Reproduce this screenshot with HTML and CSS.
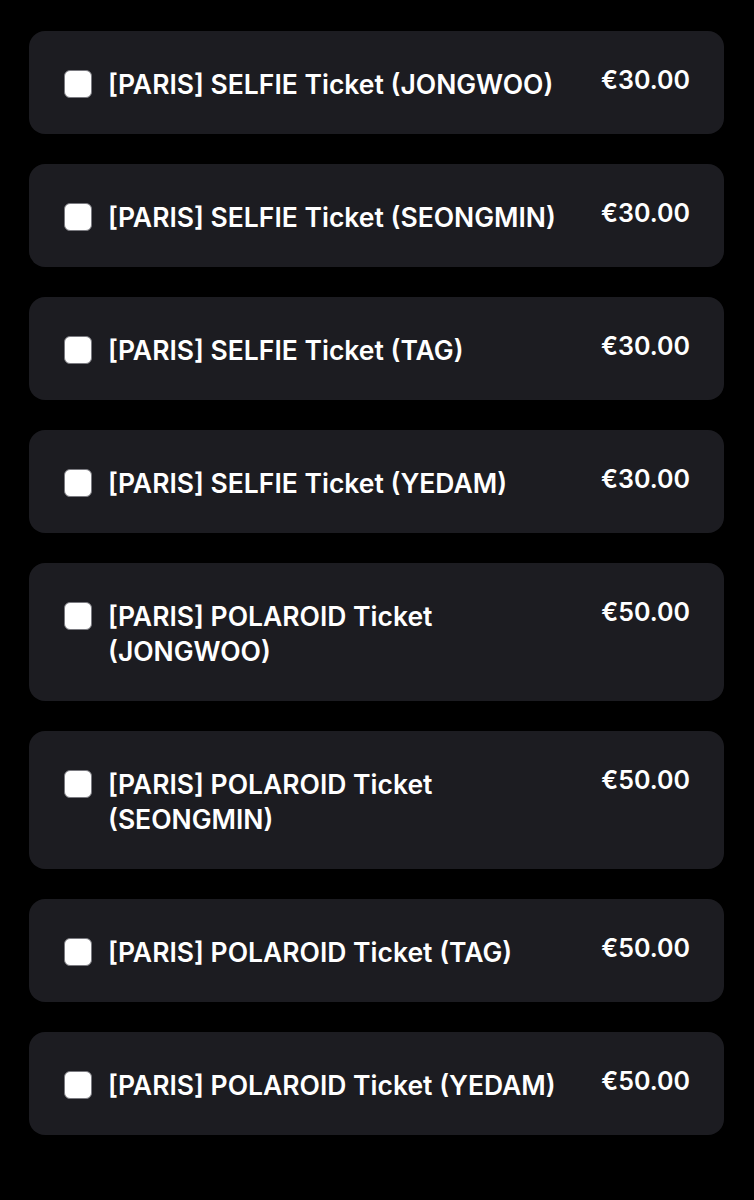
FILE: index.html
```html
<!DOCTYPE html>
<html lang="en">
<head>
  <meta charset="UTF-8">
  <meta name="viewport" content="width=device-width, initial-scale=1.0">
  <title>Tickets</title>
  <link rel="stylesheet" href="styles.css">
</head>
<body>
  <div class="list">
    <label class="ticket">
      <span class="box"></span>
      <span class="name">[PARIS] SELFIE Ticket (JONGWOO)</span>
      <span class="price">€30.00</span>
    </label>
    <label class="ticket">
      <span class="box"></span>
      <span class="name">[PARIS] SELFIE Ticket (SEONGMIN)</span>
      <span class="price">€30.00</span>
    </label>
    <label class="ticket">
      <span class="box"></span>
      <span class="name">[PARIS] SELFIE Ticket (TAG)</span>
      <span class="price">€30.00</span>
    </label>
    <label class="ticket">
      <span class="box"></span>
      <span class="name">[PARIS] SELFIE Ticket (YEDAM)</span>
      <span class="price">€30.00</span>
    </label>
    <label class="ticket">
      <span class="box"></span>
      <span class="name">[PARIS] POLAROID Ticket<br>(JONGWOO)</span>
      <span class="price">€50.00</span>
    </label>
    <label class="ticket">
      <span class="box"></span>
      <span class="name">[PARIS] POLAROID Ticket<br>(SEONGMIN)</span>
      <span class="price">€50.00</span>
    </label>
    <label class="ticket">
      <span class="box"></span>
      <span class="name">[PARIS] POLAROID Ticket (TAG)</span>
      <span class="price">€50.00</span>
    </label>
    <label class="ticket">
      <span class="box"></span>
      <span class="name">[PARIS] POLAROID Ticket (YEDAM)</span>
      <span class="price">€50.00</span>
    </label>
  </div>
</body>
</html>
```

FILE: styles.css
```css
body {
  margin: 0;
  background-color: #000;
  font-family: Inter, "Noto Sans", sans-serif;
  color: #fff;
}

.list {
  display: flex;
  flex-direction: column;
  gap: 30px;
  padding: 31px 30px 40px 29px;
}

.ticket {
  display: flex;
  align-items: flex-start;
  background-color: #1c1c21;
  border-radius: 16px;
  padding: 36px 34px 32px 35px;
}

.box {
  flex: none;
  width: 26px;
  height: 26px;
  margin-top: 3px;
  margin-right: 16px;
  background-color: #fff;
  border: 1px solid #7a7a80;
  border-radius: 6px;
}

.name {
  flex: 1;
  font-size: 26.5px;
  font-weight: 600;
  line-height: 35px;
}

.price {
  flex: none;
  font-size: 25px;
  font-weight: 600;
  line-height: 26px;
  margin-left: 20px;
}
```
